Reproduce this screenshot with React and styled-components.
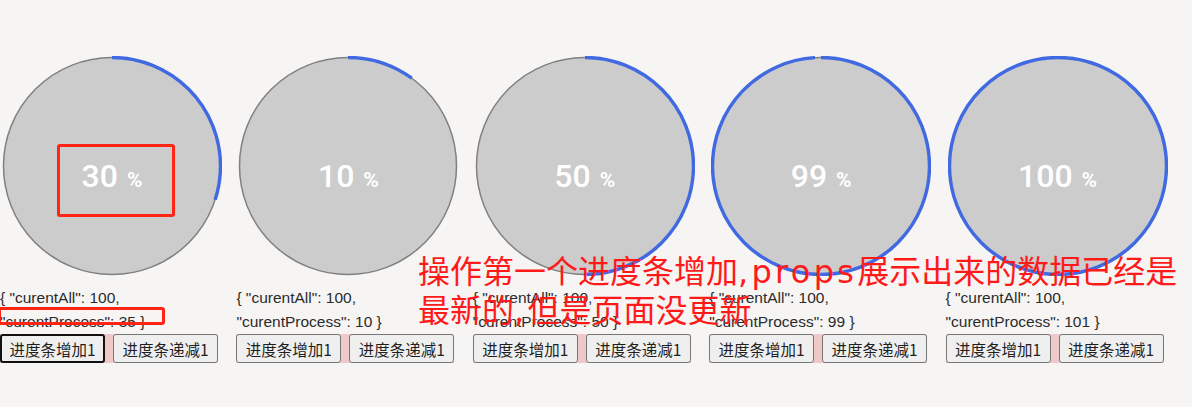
import React from 'react';
import styled, { createGlobalStyle } from 'styled-components';

const GlobalStyle = createGlobalStyle`
  html, body {
    margin: 0;
    padding: 0;
    background: #f6f5f4;
  }
  body {
    font-family: "Liberation Sans", "Noto Sans CJK SC", sans-serif;
    overflow: hidden;
  }
`;

const items = [
  { all: 100, process: 35, shown: 30, focused: true },
  { all: 100, process: 10, shown: 10 },
  { all: 100, process: 50, shown: 50 },
  { all: 100, process: 99, shown: 99 },
  { all: 100, process: 101, shown: 100 },
];

const R = 108.5;
const CIRC = 2 * Math.PI * R;

function Ring({ percent }) {
  const len = (Math.min(percent, 100) / 100) * CIRC;
  return (
    <RingSvg width="220" height="220" viewBox="0 0 220 220">
      <circle cx="110" cy="110" r={R} fill="#cccccc" stroke="#808080" strokeWidth="1.5" />
      <circle
        cx="110"
        cy="110"
        r={R}
        fill="none"
        stroke="#4169e1"
        strokeWidth="3.4"
        strokeDasharray={`${len} ${CIRC}`}
        transform="rotate(-90 110 110)"
      />
    </RingSvg>
  );
}

function ProgressCard({ item }) {
  return (
    <Column>
      <RingWrap>
        <Ring percent={item.shown} />
        <Label>
          <Num>{item.shown}</Num>
          <Pct>%</Pct>
        </Label>
      </RingWrap>
      <Json>
        {`{ "curentAll": ${item.all}, "curentProcess": ${item.process} }`}
      </Json>
      <ButtonRow>
        <Button $focused={item.focused}>进度条增加1</Button>
        <Button>进度条递减1</Button>
      </ButtonRow>
    </Column>
  );
}

export default function App() {
  return (
    <>
      <GlobalStyle />
      <Page>
        {items.map((item, i) => (
          <ProgressCard key={i} item={item} />
        ))}
        <MarkBox $left={57} $top={144} $width={118} $height={73} />
        <MarkBox $left={-2} $top={307} $width={167} $height={18} />
        <Note>
          操作第一个进度条增加<Latin>,props</Latin>展示出来的数据已经是
          <br />
          最新的<Latin>,</Latin>但是页面没更新
        </Note>
      </Page>
    </>
  );
}

const Page = styled.div`
  position: relative;
  display: flex;
  width: 1192px;
  height: 407px;
`;

const Column = styled.div`
  flex: 0 0 236.4px;
  display: flex;
  flex-direction: column;
  align-items: flex-start;
`;

const RingWrap = styled.div`
  position: relative;
  width: 220px;
  height: 220px;
  margin: 56px 0 0 2px;
`;

const RingSvg = styled.svg`
  display: block;
`;

const Label = styled.div`
  position: absolute;
  left: 0;
  right: 0;
  top: 104px;
  display: flex;
  justify-content: center;
  align-items: baseline;
  gap: 9px;
  color: #ffffff;
  font-family: Roboto, "Liberation Sans", sans-serif;
  font-weight: 500;
  line-height: 1;
`;

const Num = styled.span`
  font-size: 32px;
`;

const Pct = styled.span`
  font-size: 21px;
  font-weight: 700;
`;

const Json = styled.div`
  max-width: 200px;
  margin-top: 10px;
  font-size: 15.5px;
  line-height: 24px;
  color: #2b2b2b;
`;

const ButtonRow = styled.div`
  display: inline-flex;
  gap: 8px;
  background: #efc9c9;
`;

const Button = styled.button`
  width: 105px;
  height: 29px;
  padding: 0;
  font-family: "Noto Sans CJK SC", "Liberation Sans", sans-serif;
  font-size: 15.5px;
  color: #1f1f1f;
  background: #efefef;
  border: ${(p) => (p.$focused ? '2px solid #111' : '1px solid #767676')};
  border-radius: 3px;
`;

const MarkBox = styled.div`
  position: absolute;
  left: ${(p) => p.$left}px;
  top: ${(p) => p.$top}px;
  width: ${(p) => p.$width}px;
  height: ${(p) => p.$height}px;
  border: 3px solid #ff2414;
  border-radius: 3px;
  box-sizing: border-box;
`;

const Note = styled.div`
  position: absolute;
  left: 418px;
  top: 251px;
  font-family: "Noto Sans CJK SC", sans-serif;
  font-size: 32px;
  line-height: 36px;
  color: #ff1a1a;
  white-space: nowrap;
`;

const Latin = styled.span`
  font-family: "DejaVu Sans", sans-serif;
  letter-spacing: 3.3px;
`;
